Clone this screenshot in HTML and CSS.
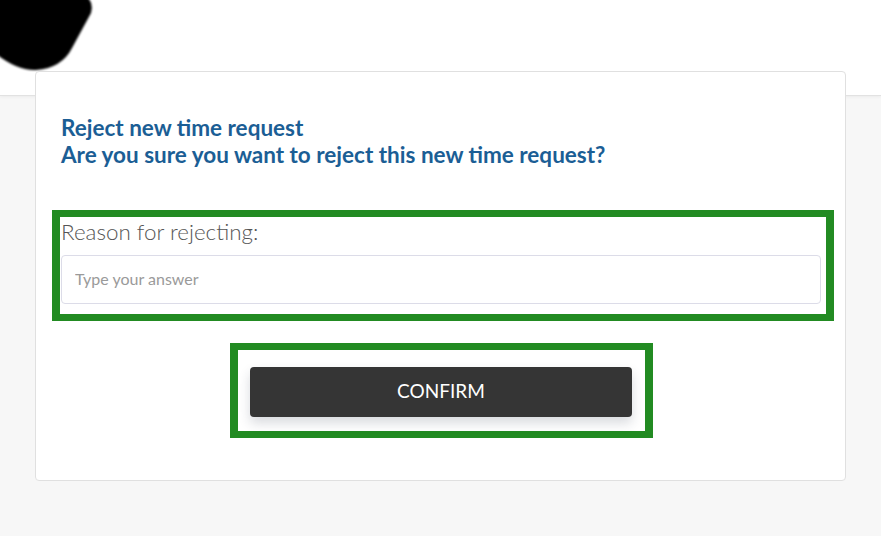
FILE: index.html
```html
<!DOCTYPE html>
<html lang="en">
<head>
<meta charset="utf-8">
<title>Reject new time request</title>
<link rel="stylesheet" href="styles.css">
</head>
<body>
<header class="topbar">
  <svg class="blob" width="100" height="76" viewBox="0 0 100 76" aria-hidden="true">
    <defs><filter id="soft" x="-10%" y="-10%" width="120%" height="120%"><feGaussianBlur stdDeviation="1.1"/></filter></defs>
    <path d="M-4,-4 L86,-4 Q94,2 91,13 L72,48 Q62,68 36,70 Q18,71 -4,54 Z" fill="#000" filter="url(#soft)"/>
  </svg>
</header>
<main class="page">
  <section class="card">
    <div class="heading">
      <h1 class="title">Reject new time request</h1>
      <p class="subtitle">Are you sure you want to reject this new time request?</p>
    </div>
    <div class="field-box">
      <label class="field-label" for="reason">Reason for rejecting:</label>
      <input class="field-input" id="reason" type="text" placeholder="Type your answer">
    </div>
    <div class="action-row">
      <div class="action-box">
        <button class="confirm" type="button">CONFIRM</button>
      </div>
    </div>
  </section>
</main>
</body>
</html>
```
FILE: styles.css
```css
* { box-sizing: border-box; }
html, body { margin: 0; padding: 0; }
body {
  background: #f7f7f7;
  font-family: Lato, "Open Sans", "Liberation Sans", sans-serif;
  height: 536px;
  overflow: hidden;
}
.topbar {
  height: 96px;
  background: #fff;
  border-bottom: 1px solid #e2e2e2;
  box-shadow: 0 1px 3px rgba(0,0,0,0.05);
  position: relative;
}
.blob {
  position: absolute;
  left: 0;
  top: 0;
}
.page {
  padding-left: 35px;
  position: relative;
}
.card {
  margin-top: -25px;
  width: 811px;
  height: 410px;
  background: #fff;
  border: 1px solid #e0e0e0;
  border-radius: 4px;
  padding: 42px 0 0 16px;
  position: relative;
}
.heading { padding-left: 9px; }
.title, .subtitle {
  margin: 0;
  font-size: 22.5px;
  line-height: 27px;
  font-weight: 700;
  color: #1b5e95;
}
.field-box {
  margin-top: 42px;
  width: 782px;
  height: 111px;
  border: 8px solid #228b22;
  border-top-width: 7px;
  border-bottom-width: 7px;
  padding: 1px 5px 0 1px;
  display: flex;
  flex-direction: column;
}
.field-label {
  font-size: 22.4px;
  font-weight: 300;
  line-height: 28px;
  color: #555;
  margin-bottom: 9px;
}
.field-input {
  height: 49px;
  width: 100%;
  flex: none;
  border: 1px solid #dcdce8;
  border-radius: 4px;
  padding: 0 13px 2px;
  font-family: inherit;
  font-size: 16px;
  color: #333;
  outline: none;
}
.field-input::placeholder { color: #9a9a9a; }
.action-row {
  display: flex;
  justify-content: center;
  margin-top: 22px;
  padding-right: 14px;
}
.action-box {
  width: 423px;
  height: 95px;
  border: 8px solid #228b22;
  border-top-width: 7px;
  border-bottom-width: 7px;
  padding: 17px 13px 0 12px;
}
.confirm {
  width: 382px;
  height: 50px;
  background: #353535;
  color: #fff;
  border: none;
  border-radius: 4px;
  font-family: inherit;
  font-size: 19px;
  font-weight: 400;
  padding: 0 0 4px;
  box-shadow: 0 6px 12px rgba(40,50,70,0.18);
  cursor: pointer;
}
```
